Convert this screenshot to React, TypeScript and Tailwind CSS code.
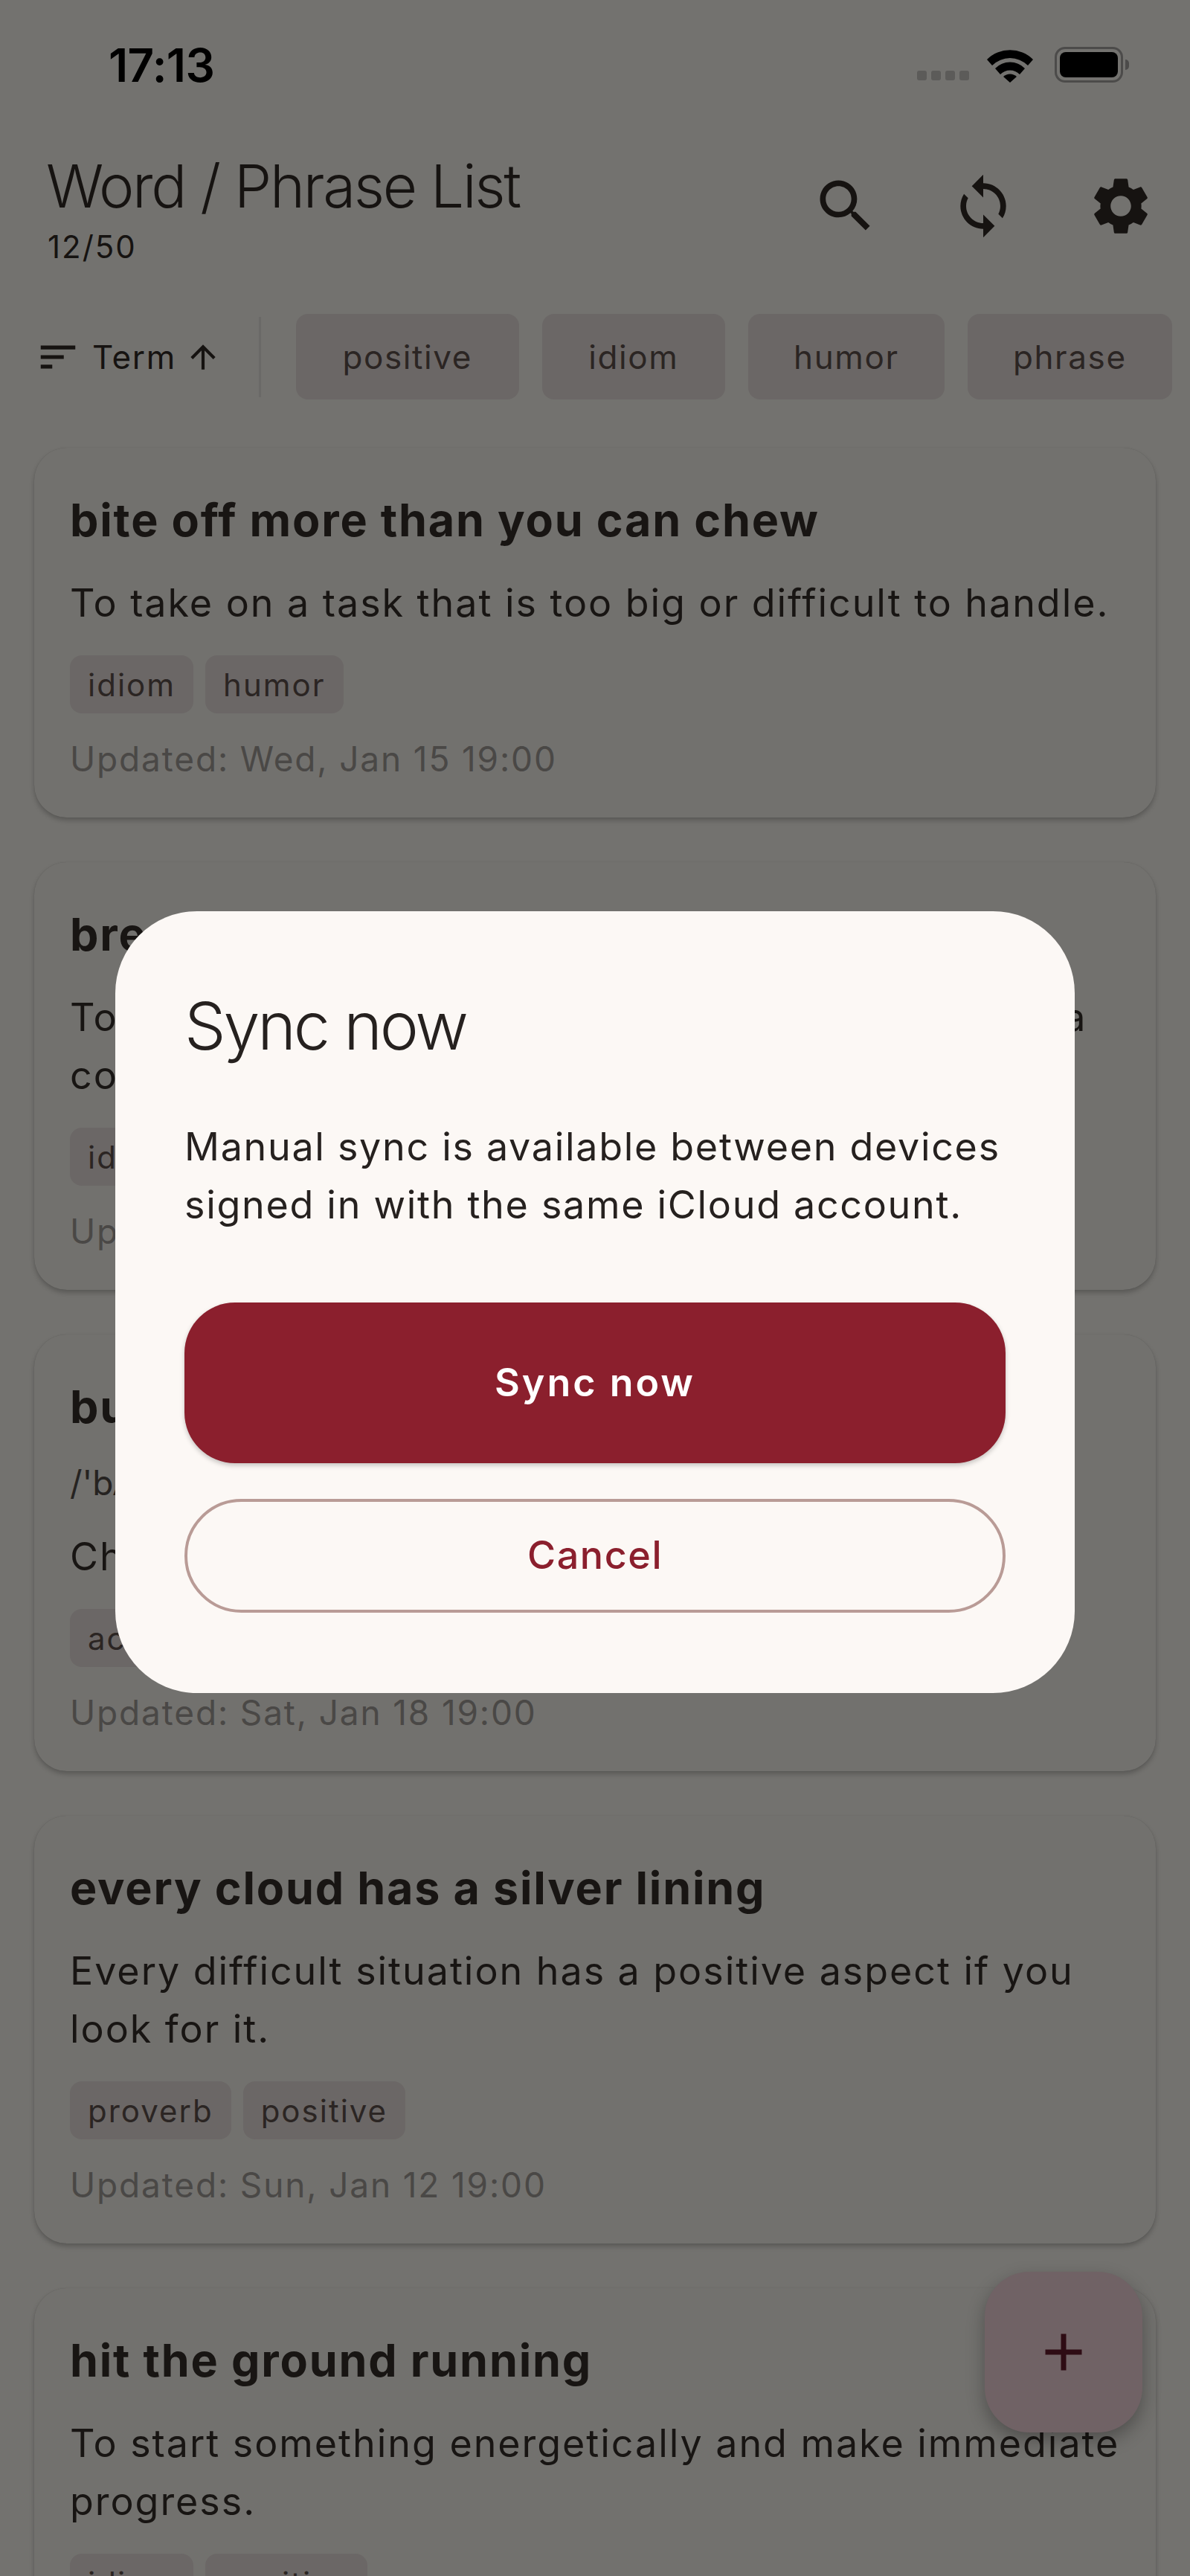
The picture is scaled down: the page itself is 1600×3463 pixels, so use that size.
import { ReactNode } from 'react'

interface Entry {
  term: string
  phonetic?: string
  meaning: string
  tags: string[]
  updated: string
}

const entries: Entry[] = [
  {
    term: 'bite off more than you can chew',
    meaning: 'To take on a task that is too big or difficult to handle.',
    tags: ['idiom', 'humor'],
    updated: 'Updated: Wed, Jan 15 19:00',
  },
  {
    term: 'break the ice',
    meaning: 'To do or say something to ease tensions and start a conversation.',
    tags: ['idiom'],
    updated: 'Updated: Mon, Jan 13 19:00',
  },
  {
    term: 'bucket list',
    phonetic: "/'bʌkɪt lɪst/",
    meaning: 'Choices to make before you die.',
    tags: ['action'],
    updated: 'Updated: Sat, Jan 18 19:00',
  },
  {
    term: 'every cloud has a silver lining',
    meaning: 'Every difficult situation has a positive aspect if you look for it.',
    tags: ['proverb', 'positive'],
    updated: 'Updated: Sun, Jan 12 19:00',
  },
  {
    term: 'hit the ground running',
    meaning: 'To start something energetically and make immediate progress.',
    tags: ['idiom', 'positive'],
    updated: 'Updated: Tue, Jan 14 19:00',
  },
]

function MaterialIcon({ d, className }: { d: string; className: string }) {
  return (
    <svg viewBox="0 0 24 24" fill="currentColor" className={className}>
      <path d={d} />
    </svg>
  )
}

const searchPath =
  'M15.5 14h-.79l-.28-.27C15.41 12.59 16 11.11 16 9.5 16 5.91 13.09 3 9.5 3S3 5.91 3 9.5 5.91 16 9.5 16c1.61 0 3.09-.59 4.23-1.57l.27.28v.79l5 4.99L20.49 19l-4.99-5zm-6 0C7.01 14 5 11.99 5 9.5S7.01 5 9.5 5 14 7.01 14 9.5 11.99 14 9.5 14z'
const syncPath =
  'M12 4V1L8 5l4 4V6c3.31 0 6 2.69 6 6 0 1.01-.25 1.97-.7 2.8l1.46 1.46C19.54 15.03 20 13.57 20 12c0-4.42-3.58-8-8-8zm0 14c-3.31 0-6-2.69-6-6 0-1.01.25-1.97.7-2.8L5.24 7.74C4.46 8.97 4 10.43 4 12c0 4.42 3.58 8 8 8v3l4-4-4-4v3z'
const settingsPath =
  'M19.14 12.94c.04-.3.06-.61.06-.94 0-.32-.02-.64-.07-.94l2.03-1.58c.18-.14.23-.41.12-.61l-1.92-3.32c-.12-.22-.37-.29-.59-.22l-2.39.96c-.5-.38-1.03-.7-1.62-.94l-.36-2.54c-.04-.24-.24-.41-.48-.41h-3.84c-.24 0-.43.17-.47.41l-.36 2.54c-.59.24-1.13.57-1.62.94l-2.39-.96c-.22-.08-.47 0-.59.22L2.74 8.87c-.12.21-.08.47.12.61l2.03 1.58c-.05.3-.09.63-.09.94s.02.64.07.94l-2.03 1.58c-.18.14-.23.41-.12.61l1.92 3.32c.12.22.37.29.59.22l2.39-.96c.5.38 1.03.7 1.62.94l.36 2.54c.05.24.24.41.48.41h3.84c.24 0 .44-.17.47-.41l.36-2.54c.59-.24 1.13-.56 1.62-.94l2.39.96c.22.08.47 0 .59-.22l1.92-3.32c.12-.22.07-.47-.12-.61l-2.01-1.58zM12 15.6c-1.98 0-3.6-1.62-3.6-3.6s1.62-3.6 3.6-3.6 3.6 1.62 3.6 3.6-1.62 3.6-3.6 3.6z'
const sortPath = 'M3 18h6v-2H3v2zM3 6v2h18V6H3zm0 7h12v-2H3v2z'
const arrowUpPath = 'M4 12l1.41 1.41L11 7.83V20h2V7.83l5.58 5.59L20 12l-8-8-8 8z'
const plusPath = 'M19 13h-6v6h-2v-6H5v-2h6V5h2v6h6v2z'

function StatusBar() {
  return (
    <div className="flex h-[175px] items-start justify-between pl-[146px] pr-[82px] pt-[52px]">
      <span className="text-[62px] leading-[72px] font-semibold tracking-[-0.6px] text-black">17:13</span>
      <div className="flex items-end pt-[11px]">
        <div className="mb-[3px] flex gap-[6px]">
          <div className="h-[13px] w-[13px] rounded-[3px] bg-[#5c5b59]" />
          <div className="h-[13px] w-[13px] rounded-[3px] bg-[#5c5b59]" />
          <div className="h-[13px] w-[13px] rounded-[3px] bg-[#5c5b59]" />
          <div className="h-[13px] w-[13px] rounded-[3px] bg-[#5c5b59]" />
        </div>
        <svg viewBox="0 0 62 46" className="ml-[24px] h-[46px] w-[62px]">
          <path d="M0 15 A44 44 0 0 1 62 15 L55 23 A34 34 0 0 0 7 23 Z" fill="#000" />
          <path d="M11 27 A28 28 0 0 1 51 27 L44 35 A18 18 0 0 0 18 35 Z" fill="#000" />
          <path d="M22 38 A13 13 0 0 1 40 38 L31 46 Z" fill="#000" />
        </svg>
        <div className="ml-[29px] flex items-center">
          <div className="flex h-[48px] w-[92px] rounded-[14px] border-[3px] border-[#4c4b4a] p-[4px]">
            <div className="h-full w-full rounded-[8px] bg-black" />
          </div>
          <div className="ml-[3px] h-[14px] w-[5px] rounded-r-full bg-[#4c4b4a]" />
        </div>
      </div>
    </div>
  )
}

function Header() {
  return (
    <div className="flex h-[247px] items-start justify-between pl-[62px] pr-[47px]">
      <div className="pt-[30px]">
        <div className="text-[80px] leading-[90px] font-light tracking-[-2.3px]">Word / Phrase List</div>
        <div className="mt-[14px] pl-[2px] text-[42px] leading-[46px] tracking-[2px]">12/50</div>
      </div>
      <div className="flex gap-[93px] pt-[56px]">
        <MaterialIcon d={searchPath} className="h-[92px] w-[92px]" />
        <MaterialIcon d={syncPath} className="h-[92px] w-[92px]" />
        <MaterialIcon d={settingsPath} className="h-[92px] w-[92px]" />
      </div>
    </div>
  )
}

function FilterRow() {
  const chips = [
    ['positive', 'w-[300px]'],
    ['idiom', 'w-[246px]'],
    ['humor', 'w-[264px]'],
    ['phrase', 'w-[275px]'],
  ]
  return (
    <div className="flex h-[115px] items-center overflow-hidden pl-[47px]">
      <div className="flex items-center">
        <MaterialIcon d={sortPath} className="h-[62px] w-[62px]" />
        <span className="ml-[15px] text-[44px] leading-[50px] tracking-[1.6px]">Term</span>
        <MaterialIcon d={arrowUpPath} className="ml-[11px] h-[50px] w-[50px]" />
      </div>
      <div className="ml-[50px] h-[108px] w-[3px] shrink-0 bg-[#6a6967]" />
      <div className="ml-[47px] flex shrink-0 gap-[31px]">
        {chips.map(([label, width]) => (
          <div
            key={label}
            className={`flex h-[115px] ${width} shrink-0 items-center justify-center rounded-[16px] bg-[#6b6766] text-[44px] tracking-[1.6px] text-[#2b2523]`}
          >
            {label}
          </div>
        ))}
      </div>
    </div>
  )
}

function Tag({ children }: { children: ReactNode }) {
  return (
    <span className="flex h-[78px] items-center rounded-[16px] bg-[#6b6766] px-[24px] text-[42px] tracking-[2px] text-[#2b2523]">
      {children}
    </span>
  )
}

function EntryCard({ entry }: { entry: Entry }) {
  return (
    <div className="rounded-[44px] bg-[#72716e] pl-[48px] pr-[40px] pt-[58px] pb-[48px] shadow-[0_4px_6px_rgba(0,0,0,0.22),0_0_1px_rgba(0,0,0,0.15)]">
      <div className="text-[61px] leading-[78px] font-bold tracking-[1.8px] text-[#181513]">{entry.term}</div>
      {entry.phonetic && (
        <div className="mt-[36px] text-[46px] leading-[54px] text-[#262321]">{entry.phonetic}</div>
      )}
      <div className="mt-[34px] text-[52px] leading-[78px] tracking-[1.95px] text-[#181513]">{entry.meaning}</div>
      <div className="mt-[31px] flex gap-[16px]">
        {entry.tags.map((tag) => (
          <Tag key={tag}>{tag}</Tag>
        ))}
      </div>
      <div className="mt-[30px] text-[46px] leading-[62px] tracking-[1.85px] text-[#4a4846]">{entry.updated}</div>
    </div>
  )
}

function SyncDialog() {
  return (
    <div className="absolute inset-0 flex items-center justify-center pt-[37px]">
      <div className="w-[1290px] rounded-[110px] bg-[#fcf8f5] px-[93px] pt-[102px] pb-[108px]">
        <div className="text-[88px] leading-[104px] font-light tracking-[-3.2px] text-[#26211f]">Sync now</div>
        <div className="mt-[72px] text-[52px] leading-[78px] tracking-[1.7px] text-[#26211f]">
          Manual sync is available between devices signed in with the same iCloud account.
        </div>
        <button className="mt-[92px] flex h-[216px] w-full items-center justify-center rounded-[68px] bg-[#8b1f2d] text-[52px] font-semibold tracking-[3px] text-white shadow-[0_3px_6px_rgba(0,0,0,0.22)]">
          Sync now
        </button>
        <button className="mt-[48px] flex h-[153px] w-full items-center justify-center rounded-full border-4 border-[#b99b96] text-[52px] font-medium tracking-[1.6px] text-[#8b1f2d]">
          Cancel
        </button>
      </div>
    </div>
  )
}

export default function App() {
  return (
    <div className="relative h-[3463px] w-[1600px] overflow-hidden bg-[#73726f] font-[Inter,sans-serif] text-[#161311]">
      <StatusBar />
      <Header />
      <FilterRow />
      <div className="flex flex-col gap-[60px] px-[46px] pt-[65px]">
        {entries.map((entry) => (
          <EntryCard key={entry.term} entry={entry} />
        ))}
      </div>
      <div className="absolute top-[3054px] left-[1324px] flex h-[216px] w-[212px] items-center justify-center rounded-[60px] bg-[#706265] text-[#2e0c14] shadow-[0_10px_24px_rgba(0,0,0,0.3)]">
        <MaterialIcon d={plusPath} className="h-[84px] w-[84px]" />
      </div>
      <SyncDialog />
    </div>
  )
}
